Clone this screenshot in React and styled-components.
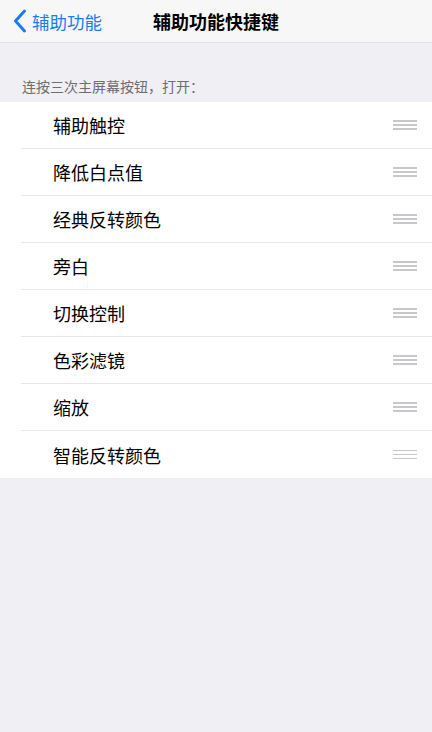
import React from 'react'
import styled, { createGlobalStyle } from 'styled-components'

const Global = createGlobalStyle`
  html, body {
    margin: 0;
    padding: 0;
    background: #efeff4;
    font-family: "Noto Sans CJK SC", "Noto Sans", sans-serif;
  }
`
const Page = styled.div`
  width: 432px;
  min-height: 732px;
  background: #efeff4;
`
const NavBar = styled.div`
  position: relative;
  height: 42px;
  display: flex;
  align-items: center;
  justify-content: center;
  background: #f7f7f8;
  border-bottom: 1px solid #e2e2e6;
`
const BackButton = styled.div`
  position: absolute;
  left: 13px;
  top: 0;
  bottom: 0;
  display: flex;
  align-items: center;
  gap: 5px;
  color: #1a7cf5;
  font-size: 17.5px;
`
const Title = styled.div`
  font-size: 18px;
  font-weight: 600;
  color: #000;
`
const SectionHeader = styled.div`
  padding: 33px 0 6px 22px;
  font-size: 14px;
  line-height: 20px;
  color: #6d6d72;
`
const List = styled.div`
  background: #fff;
`
const Row = styled.div`
  height: 47px;
  margin-left: 21px;
  padding-left: 32px;
  padding-right: 15px;
  display: flex;
  align-items: center;
  justify-content: space-between;
  border-bottom: ${p => (p.last ? 'none' : '1px solid #e6e6ea')};
  box-sizing: border-box;
`
const Label = styled.span`
  font-size: 18px;
  color: #000;
`
const Handle = styled.div`
  width: 24px;
  display: flex;
  flex-direction: column;
  gap: 2.5px;
  span {
    display: block;
    height: 1.5px;
    background: #c7c7cc;
  }
`

const items = [
  '辅助触控',
  '降低白点值',
  '经典反转颜色',
  '旁白',
  '切换控制',
  '色彩滤镜',
  '缩放',
  '智能反转颜色',
]

export default function App() {
  return (
    <Page>
      <Global />
      <NavBar>
        <BackButton>
          <svg width="14" height="24" viewBox="0 0 14 24">
            <path d="M11.5 2 L2.5 12 L11.5 22" fill="none" stroke="#1a7cf5" strokeWidth="3" strokeLinecap="round" strokeLinejoin="round" />
          </svg>
          辅助功能
        </BackButton>
        <Title>辅助功能快捷键</Title>
      </NavBar>
      <SectionHeader>连按三次主屏幕按钮，打开：</SectionHeader>
      <List>
        {items.map((t, i) => (
          <Row key={t} last={i === items.length - 1}>
            <Label>{t}</Label>
            <Handle>
              <span />
              <span />
              <span />
            </Handle>
          </Row>
        ))}
      </List>
    </Page>
  )
}
